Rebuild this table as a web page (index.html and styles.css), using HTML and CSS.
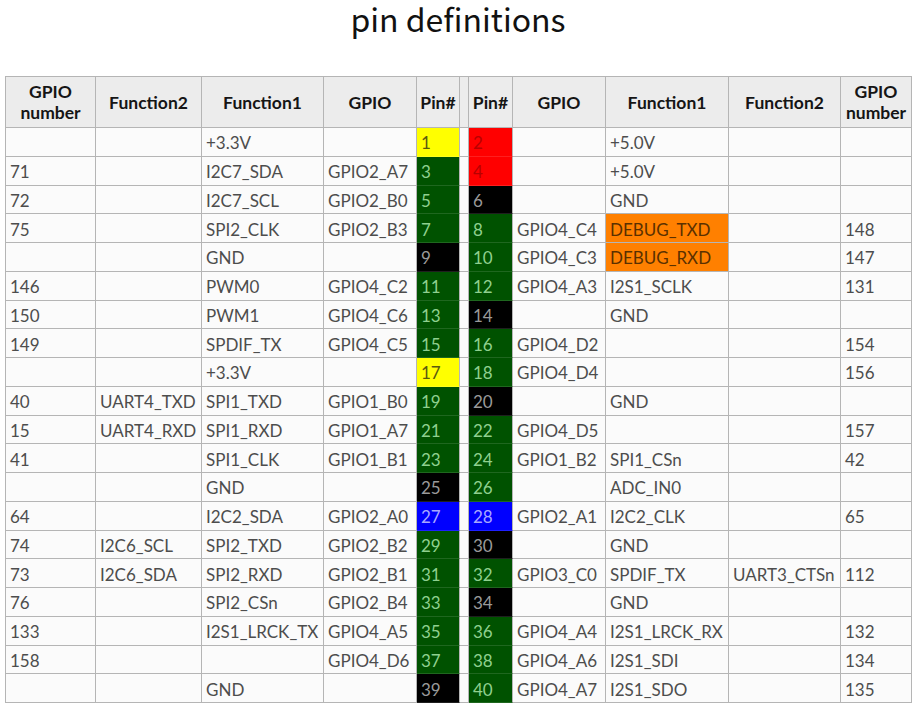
FILE: index.html
```html
<!DOCTYPE html>
<html>
<head>
<meta charset="utf-8">
<link rel="stylesheet" href="styles.css">
</head>
<body>
<h1 class="title">pin definitions</h1>
<div class="wrap">
<table class="pins">
<colgroup>
<col class="c1"><col class="c2"><col class="c3"><col class="c4"><col class="c5"><col class="c6"><col class="c7"><col class="c8"><col class="c9"><col class="c10"><col class="c11">
</colgroup>
<thead>
<tr>
<th>GPIO<br>number</th><th>Function2</th><th>Function1</th><th>GPIO</th><th>Pin#</th><th class="gap"></th><th>Pin#</th><th>GPIO</th><th>Function1</th><th>Function2</th><th>GPIO<br>number</th>
</tr>
</thead>
<tbody>
<tr><td></td><td></td><td>+3.3V</td><td></td><td class="p y">1</td><td class="gap"></td><td class="p r">2</td><td></td><td>+5.0V</td><td></td><td></td></tr>
<tr><td>71</td><td></td><td>I2C7_SDA</td><td>GPIO2_A7</td><td class="p g">3</td><td class="gap"></td><td class="p r">4</td><td></td><td>+5.0V</td><td></td><td></td></tr>
<tr><td>72</td><td></td><td>I2C7_SCL</td><td>GPIO2_B0</td><td class="p g">5</td><td class="gap"></td><td class="p k">6</td><td></td><td>GND</td><td></td><td></td></tr>
<tr><td>75</td><td></td><td>SPI2_CLK</td><td>GPIO2_B3</td><td class="p g">7</td><td class="gap"></td><td class="p g">8</td><td>GPIO4_C4</td><td class="o">DEBUG_TXD</td><td></td><td>148</td></tr>
<tr><td></td><td></td><td>GND</td><td></td><td class="p k">9</td><td class="gap"></td><td class="p g">10</td><td>GPIO4_C3</td><td class="o">DEBUG_RXD</td><td></td><td>147</td></tr>
<tr><td>146</td><td></td><td>PWM0</td><td>GPIO4_C2</td><td class="p g">11</td><td class="gap"></td><td class="p g">12</td><td>GPIO4_A3</td><td>I2S1_SCLK</td><td></td><td>131</td></tr>
<tr><td>150</td><td></td><td>PWM1</td><td>GPIO4_C6</td><td class="p g">13</td><td class="gap"></td><td class="p k">14</td><td></td><td>GND</td><td></td><td></td></tr>
<tr><td>149</td><td></td><td>SPDIF_TX</td><td>GPIO4_C5</td><td class="p g">15</td><td class="gap"></td><td class="p g">16</td><td>GPIO4_D2</td><td></td><td></td><td>154</td></tr>
<tr><td></td><td></td><td>+3.3V</td><td></td><td class="p y">17</td><td class="gap"></td><td class="p g">18</td><td>GPIO4_D4</td><td></td><td></td><td>156</td></tr>
<tr><td>40</td><td>UART4_TXD</td><td>SPI1_TXD</td><td>GPIO1_B0</td><td class="p g">19</td><td class="gap"></td><td class="p k">20</td><td></td><td>GND</td><td></td><td></td></tr>
<tr><td>15</td><td>UART4_RXD</td><td>SPI1_RXD</td><td>GPIO1_A7</td><td class="p g">21</td><td class="gap"></td><td class="p g">22</td><td>GPIO4_D5</td><td></td><td></td><td>157</td></tr>
<tr><td>41</td><td></td><td>SPI1_CLK</td><td>GPIO1_B1</td><td class="p g">23</td><td class="gap"></td><td class="p g">24</td><td>GPIO1_B2</td><td>SPI1_CSn</td><td></td><td>42</td></tr>
<tr><td></td><td></td><td>GND</td><td></td><td class="p k">25</td><td class="gap"></td><td class="p g">26</td><td></td><td>ADC_IN0</td><td></td><td></td></tr>
<tr><td>64</td><td></td><td>I2C2_SDA</td><td>GPIO2_A0</td><td class="p b">27</td><td class="gap"></td><td class="p b">28</td><td>GPIO2_A1</td><td>I2C2_CLK</td><td></td><td>65</td></tr>
<tr><td>74</td><td>I2C6_SCL</td><td>SPI2_TXD</td><td>GPIO2_B2</td><td class="p g">29</td><td class="gap"></td><td class="p k">30</td><td></td><td>GND</td><td></td><td></td></tr>
<tr><td>73</td><td>I2C6_SDA</td><td>SPI2_RXD</td><td>GPIO2_B1</td><td class="p g">31</td><td class="gap"></td><td class="p g">32</td><td>GPIO3_C0</td><td>SPDIF_TX</td><td>UART3_CTSn</td><td>112</td></tr>
<tr><td>76</td><td></td><td>SPI2_CSn</td><td>GPIO2_B4</td><td class="p g">33</td><td class="gap"></td><td class="p k">34</td><td></td><td>GND</td><td></td><td></td></tr>
<tr><td>133</td><td></td><td>I2S1_LRCK_TX</td><td>GPIO4_A5</td><td class="p g">35</td><td class="gap"></td><td class="p g">36</td><td>GPIO4_A4</td><td>I2S1_LRCK_RX</td><td></td><td>132</td></tr>
<tr><td>158</td><td></td><td></td><td>GPIO4_D6</td><td class="p g">37</td><td class="gap"></td><td class="p g">38</td><td>GPIO4_A6</td><td>I2S1_SDI</td><td></td><td>134</td></tr>
<tr><td></td><td></td><td>GND</td><td></td><td class="p k">39</td><td class="gap"></td><td class="p g">40</td><td>GPIO4_A7</td><td>I2S1_SDO</td><td></td><td>135</td></tr>
</tbody>
</table>
</div>
</body>
</html>
```

FILE: styles.css
```css
html, body {
  margin: 0;
  padding: 0;
  background: #ffffff;
}

.title {
  margin: 0;
  height: 76px;
  box-sizing: border-box;
  text-align: center;
  font-family: "Noto Sans CJK SC", "Noto Sans", sans-serif;
  font-weight: 400;
  font-size: 32px;
  line-height: 36px;
  color: #111;
}

.wrap {
  padding-left: 5px;
}

.pins {
  table-layout: fixed;
  width: 906px;
  border-collapse: separate;
  border-spacing: 0;
  border-top: 1px solid #b5b5b5;
  border-left: 1px solid #b5b5b5;
  font-family: Lato, "Liberation Sans", sans-serif;
  font-size: 17px;
  color: #4d4d4d;
}

.c1 { width: 90px; }
.c2 { width: 106px; }
.c3 { width: 122px; }
.c4 { width: 93px; }
.c5 { width: 43px; }
.c6 { width: 9px; }
.c7 { width: 44px; }
.c8 { width: 93px; }
.c9 { width: 123px; }
.c10 { width: 112px; }
.c11 { width: 71px; }

.pins th,
.pins td {
  border-right: 1px solid #b5b5b5;
  border-bottom: 1px solid #b5b5b5;
  white-space: nowrap;
  overflow: hidden;
}

.pins th {
  height: 50px;
  background: #ececec;
  color: #151515;
  font-weight: 700;
  font-size: 17.5px;
  line-height: 21px;
  text-align: center;
  padding: 0;
}

.pins td {
  height: 24.75px;
  background: #fbfbfb;
  text-align: left;
  line-height: 20px;
  padding: 3px 0 0 4px;
}

.pins .gap {
  background: #fbfbfb;
  padding: 0;
}

.pins th.gap {
  background: #ececec;
}

.pins td.p {
  border-bottom-color: rgba(255, 255, 255, 0.12);
}

.pins td.y { background: #ffff00; color: #5a5a10; }
.pins td.r { background: #ff0000; color: #b80000; }
.pins td.g { background: #005200; color: #8fd08f; }
.pins td.k { background: #000000; color: #9a9a9a; }
.pins td.b { background: #0000ff; color: #a8a8ff; }
.pins td.o { background: #ff8000; color: #5a3000; }
```
